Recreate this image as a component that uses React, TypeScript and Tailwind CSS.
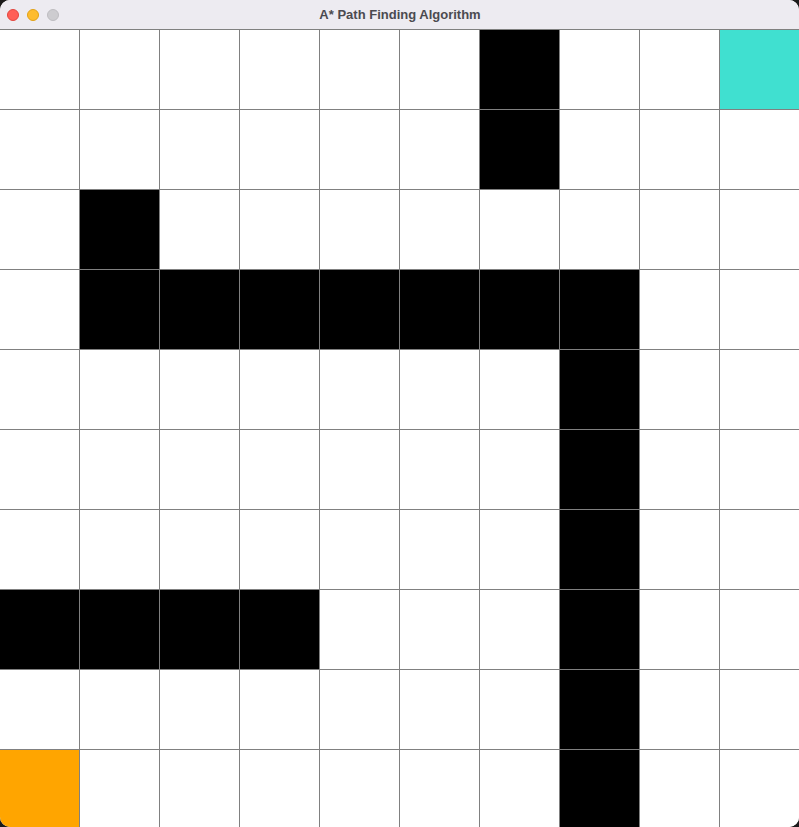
import React from "react";

const black = new Set<string>([
  "0,6", "1,6", "2,1",
  "3,1", "3,2", "3,3", "3,4", "3,5", "3,6", "3,7",
  "4,7", "5,7", "6,7", "7,7", "8,7", "9,7",
  "7,0", "7,1", "7,2", "7,3",
]);

function cellColor(r: number, c: number): string {
  if (r === 0 && c === 9) return "bg-[#40E0D0]";
  if (r === 9 && c === 0) return "bg-[#FFA500]";
  if (black.has(`${r},${c}`)) return "bg-black";
  return "bg-white";
}

export default function App() {
  const rows = Array.from({ length: 10 }, (_, i) => i);
  return (
    <div className="w-[799px] h-[827px] bg-[#1b1b1b] overflow-hidden">
      <div className="w-[799px] h-[827px] rounded-[10px] overflow-hidden bg-white flex flex-col">
        <div className="h-[29px] shrink-0 bg-[#EDEBF1] relative flex items-center justify-center">
          <div className="absolute left-[7px] top-[9px] flex gap-[8px]">
            <div className="w-[12px] h-[12px] rounded-full bg-[#FF5F57] border border-[#E2463F]" />
            <div className="w-[12px] h-[12px] rounded-full bg-[#FEBC2E] border border-[#E1A116]" />
            <div className="w-[12px] h-[12px] rounded-full bg-[#CDCCD0] border border-[#BDBCC0]" />
          </div>
          <span
            className="text-[13px] font-bold text-[#4B4A50] pl-[1px]"
            style={{ fontFamily: "'Liberation Sans', Arial, sans-serif" }}
          >
            A* Path Finding Algorithm
          </span>
        </div>
        <div className="flex flex-col">
          {rows.map((r) => (
            <div key={r} className="flex">
              {rows.map((c) => (
                <div
                  key={c}
                  className={`w-[80px] h-[80px] shrink-0 border-t border-r border-[#808080] ${cellColor(r, c)}`}
                />
              ))}
            </div>
          ))}
        </div>
      </div>
    </div>
  );
}
